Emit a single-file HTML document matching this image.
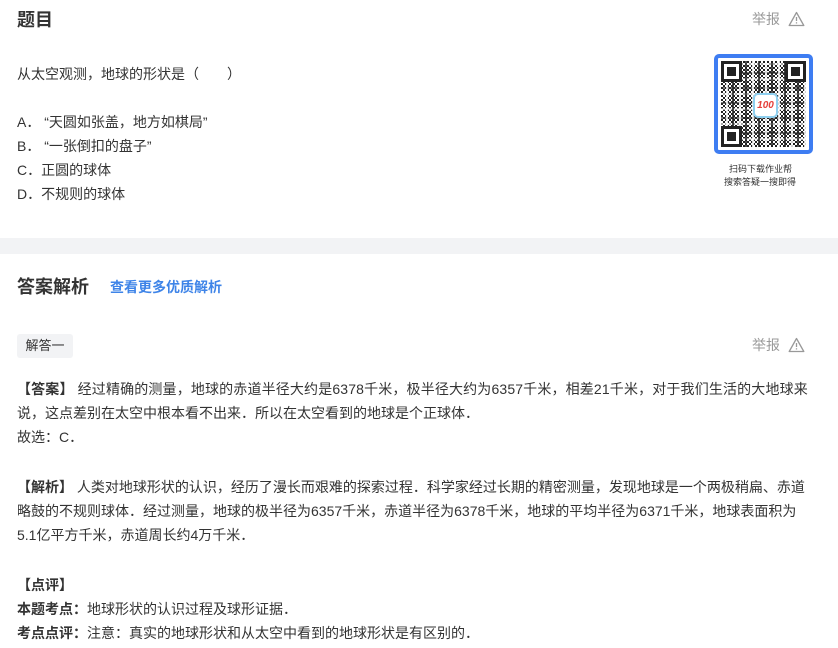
<!DOCTYPE html>
<html><head><meta charset="utf-8"><style>
*{margin:0;padding:0;box-sizing:border-box}
body{width:838px;height:648px;background:#fff;font-family:"Liberation Sans","Noto Sans CJK SC",sans-serif;color:#333;position:relative;overflow:hidden;font-size:14px}
.a{position:absolute;white-space:nowrap;line-height:24px}
.rep{position:absolute;color:#999;font-size:14px;line-height:20px}
.band{position:absolute;left:0;top:238px;width:838px;height:16px;background:#f2f3f5}
.qr{position:absolute;left:714px;top:54px;width:99px;height:100px;border:4px solid #3e7df2;border-radius:5px;background:#fff;padding:3px;overflow:hidden}
.qi{width:100%;height:100%;background:
repeating-conic-gradient(#222 0 25%,#fff 0 50%) 0 0/4px 4px,#fff;position:relative}
.qi2{position:absolute;inset:0;background:repeating-linear-gradient(90deg,transparent 0 5px,rgba(255,255,255,.8) 5px 7px,transparent 7px 11px,rgba(34,34,34,.8) 11px 13px),repeating-linear-gradient(0deg,transparent 0 7px,rgba(255,255,255,.6) 7px 9px,transparent 9px 13px,rgba(34,34,34,.6) 13px 15px)}
.f{position:absolute;width:21px;height:21px;border:3px solid #222;background:#fff}
.f::after{content:"";position:absolute;left:3px;top:3px;width:9px;height:9px;background:#222}
.logo{position:absolute;left:32px;top:32px;width:25px;height:25px;border-radius:5px;background:#fff;border:2px solid #8fd0f0;color:#e5413c;font-weight:bold;font-style:italic;font-size:10px;line-height:21px;text-align:center}
</style></head><body>
<div class="a" style="left:17px;top:7px;font-size:18px;font-weight:bold;line-height:26px">题目</div>
<div class="rep" style="left:752px;top:9px">举报 <svg width="17" height="16" viewBox="0 0 17 16" style="vertical-align:-3px;margin-left:4px"><path d="M8.5 1.5L1.2 14.5H15.8Z" fill="none" stroke="#999" stroke-width="1.3" stroke-linejoin="round"/><path d="M8.5 6v4M8.5 11.3v1.2" stroke="#999" stroke-width="1.3"/></svg></div>
<div class="a" style="left:17px;top:62px">从太空观测，地球的形状是（　　）</div>
<div class="a" style="left:17px;top:110px">A．&nbsp;“天圆如张盖，地方如棋局”</div>
<div class="a" style="left:17px;top:134px">B．&nbsp;“一张倒扣的盘子”</div>
<div class="a" style="left:17px;top:158px">C．正圆的球体</div>
<div class="a" style="left:17px;top:182px">D．不规则的球体</div>
<div class="qr"><div class="qi"><div class="qi2"></div>
<div class="f" style="left:0;top:0"></div><div class="f" style="right:0;top:0"></div><div class="f" style="left:0;bottom:0"></div>
<div class="logo">100</div></div></div>
<div class="a" style="left:729px;top:163px;font-size:9px;line-height:13px;color:#333">扫码下载作业帮</div>
<div class="a" style="left:724px;top:176px;font-size:9px;line-height:13px;color:#333">搜索答疑一搜即得</div>
<div class="band"></div>
<div class="a" style="left:17px;top:274px;font-size:18px;font-weight:bold;line-height:26px">答案解析</div>
<div class="a" style="left:110px;top:275px;color:#3e84e8;font-weight:bold">查看更多优质解析</div>
<div class="a" style="left:17px;top:334px;width:56px;height:24px;background:#f2f3f5;border-radius:3px;text-align:center;font-size:13px">解答一</div>
<div class="rep" style="left:752px;top:335px">举报 <svg width="17" height="16" viewBox="0 0 17 16" style="vertical-align:-3px;margin-left:4px"><path d="M8.5 1.5L1.2 14.5H15.8Z" fill="none" stroke="#999" stroke-width="1.3" stroke-linejoin="round"/><path d="M8.5 6v4M8.5 11.3v1.2" stroke="#999" stroke-width="1.3"/></svg></div>
<div class="a" style="left:17px;top:377px;letter-spacing:0.15px"><b>【答案】</b> 经过精确的测量，地球的赤道半径大约是6378千米，极半径大约为6357千米，相差21千米，对于我们生活的大地球来</div>
<div class="a" style="left:17px;top:401px">说，这点差别在太空中根本看不出来．所以在太空看到的地球是个正球体．</div>
<div class="a" style="left:17px;top:425px">故选：C．</div>
<div class="a" style="left:17px;top:475px"><b>【解析】</b> 人类对地球形状的认识，经历了漫长而艰难的探索过程．科学家经过长期的精密测量，发现地球是一个两极稍扁、赤道</div>
<div class="a" style="left:17px;top:499px">略鼓的不规则球体．经过测量，地球的极半径为6357千米，赤道半径为6378千米，地球的平均半径为6371千米，地球表面积为</div>
<div class="a" style="left:17px;top:523px">5.1亿平方千米，赤道周长约4万千米．</div>
<div class="a" style="left:17px;top:573px"><b>【点评】</b></div>
<div class="a" style="left:17px;top:597px"><b>本题考点：</b>地球形状的认识过程及球形证据．</div>
<div class="a" style="left:17px;top:621px"><b>考点点评：</b>注意：真实的地球形状和从太空中看到的地球形状是有区别的．</div>
</body></html>
